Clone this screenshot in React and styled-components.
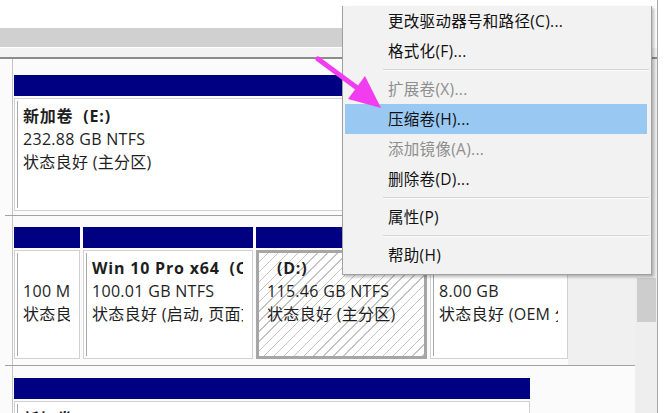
import React from "react"
import styled, { createGlobalStyle } from "styled-components"

const GlobalStyle = createGlobalStyle`
  html, body {
    margin: 0;
    padding: 0;
    background: #fff;
  }
`

const Page = styled.div`
  position: relative;
  width: 665px;
  height: 413px;
  overflow: hidden;
  background: #fff;
  font-family: "Open Sans", "Noto Sans CJK SC", sans-serif;
  color: #1e1e1e;
`

const Frame = styled.div`
  margin-right: 7px;
  height: 100%;
  border-right: 1px solid #a8a8a8;
  display: flex;
  flex-direction: column;
`

const TopBlank = styled.div`
  height: 28px;
`

const GrayBar = styled.div`
  height: 19px;
  background: #d0d0d0;
  margin-right: 6px;
`

const Strip = styled.div`
  height: 9px;
  border-top: 1px solid #fff;
  border-bottom: 2px solid #8c8c8c;
  background: #f3f3f3;
`

const Body = styled.div`
  flex: 1;
  display: flex;
  min-height: 0;
`

const DiskPane = styled.div`
  flex: 1;
  display: flex;
  flex-direction: column;
  background: #fbfbfb;
`

const DiskRow = styled.div`
  display: flex;
  margin-left: 5px;
  border-bottom: 1px solid #a2a2a2;
`

const Gutter = styled.div`
  width: 7px;
  border-right: 1px solid #c4c4c4;
`

const Partitions = styled.div`
  flex: 1;
  display: flex;
  gap: 3px;
  padding: ${p => p.$pad};
  padding-left: 1px;
`

const Column = styled.div`
  width: ${p => p.$w}px;
  flex-shrink: 0;
  display: flex;
  flex-direction: column;
  gap: 2px;
`

const Filler = styled.div`
  flex: 1;
  background: #f0f0f0;
  margin: -12px 0 -6px -3px;
`

const Bar = styled.div`
  height: 21px;
  background: #000082;
`

const Box = styled.div`
  height: ${p => p.$h}px;
  box-sizing: border-box;
  background: #fff;
  border: 1px solid #d2d2d2;
  padding: 2px 0 2px 2px;
`

const HatchBox = styled.div`
  height: ${p => p.$h}px;
  box-sizing: border-box;
  border: 3px solid #a6a6a6;
  background-color: #fff;
  background-image: repeating-linear-gradient(
    135deg,
    #fff 0px,
    #fff 6px,
    #c4c4c4 6px,
    #c4c4c4 7px
  );
  padding: ${p => p.$top || 4}px 8px 0 8px;
  overflow: hidden;
`

const Inner = styled.div`
  height: 100%;
  box-sizing: border-box;
  border-left: 1px solid #a8a8a8;
  padding: ${p => p.$top || 4}px 9px 0 5px;
  overflow: hidden;
`

const Line = styled.div`
  font-size: 16px;
  line-height: 23px;
  white-space: pre;
  overflow: hidden;
  font-weight: ${p => (p.$bold ? 700 : 400)};
  letter-spacing: ${p => (p.$bold ? "0.8px" : "0.3px")};
  color: #1e1e1e;
`

const Scrollbar = styled.div`
  width: 22px;
  background: #eeeeee;
  display: flex;
  flex-direction: column;
  align-items: center;
`

const Thumb = styled.div`
  margin-top: 219px;
  width: 19px;
  height: 44px;
  background: #cdcdcd;
`

const Menu = styled.div`
  position: absolute;
  left: 342px;
  top: 6px;
  width: 308px;
  background: #f2f2f2;
  border: 1px solid #a0a0a0;
  border-top: none;
  box-shadow: 2px 2px 3px rgba(0, 0, 0, 0.28);
  padding-bottom: 4px;
  font-size: 15.5px;
  letter-spacing: 0.3px;
  z-index: 2;
`

const Item = styled.div`
  height: 30px;
  line-height: 30px;
  margin: 0 4px 0 2px;
  padding-left: 43px;
  white-space: nowrap;
  color: ${p => (p.$disabled ? "#8e8e8e" : "#111")};
  background: ${p => (p.$active ? "#99c9f3" : "transparent")};
`

const Separator = styled.div`
  height: 8px;
  display: flex;
  align-items: center;
  padding: 0 2px 0 40px;

  &::after {
    content: "";
    flex: 1;
    border-top: 1px solid #d4d4d4;
    border-bottom: 1px solid #fbfbfb;
  }
`

const Arrow = styled.svg`
  position: absolute;
  left: 300px;
  top: 40px;
  z-index: 3;
`

const Part = ({ w, h, hatch, top, lines }) => {
  const content = lines.map((l, i) => (
    <Line key={i} $bold={l.bold}>{l.text}</Line>
  ))
  return (
    <Column $w={w}>
      <Bar />
      {hatch ? (
        <HatchBox $h={h} $top={top}>{content}</HatchBox>
      ) : (
        <Box $h={h}>
          <Inner $top={top}>{content}</Inner>
        </Box>
      )}
    </Column>
  )
}

const menuItems = [
  { text: "更改驱动器号和路径(C)..." },
  { text: "格式化(F)..." },
  { sep: true },
  { text: "扩展卷(X)...", disabled: true },
  { text: "压缩卷(H)...", active: true },
  { text: "添加镜像(A)...", disabled: true },
  { text: "删除卷(D)..." },
  { sep: true },
  { text: "属性(P)" },
  { sep: true },
  { text: "帮助(H)" },
]

export default function App() {
  return (
    <Page>
      <GlobalStyle />
      <Frame>
        <TopBlank />
        <GrayBar />
        <Strip />
        <Body>
          <DiskPane>
            <DiskRow>
              <Gutter />
              <Partitions $pad="16px 0 4px 0">
                <Part
                  w={554}
                  h={113}
                  lines={[
                    { text: "新加卷  (E:)", bold: true },
                    { text: "232.88 GB NTFS" },
                    { text: "状态良好 (主分区)" },
                  ]}
                />
              </Partitions>
            </DiskRow>
            <DiskRow>
              <Gutter />
              <Partitions $pad="11px 0 6px 0">
                <Part
                  w={66}
                  h={109}
                  lines={[
                    { text: " ", bold: true },
                    { text: "100 MB" },
                    { text: "状态良好 (EFI 系统分区)" },
                  ]}
                />
                <Part
                  w={170}
                  h={109}
                  lines={[
                    { text: "Win 10 Pro x64  (C:)", bold: true },
                    { text: "100.01 GB NTFS" },
                    { text: "状态良好 (启动, 页面文件, 故障转储, 主分区)" },
                  ]}
                />
                <Part
                  w={171}
                  h={109}
                  hatch
                  lines={[
                    { text: "  (D:)", bold: true },
                    { text: "115.46 GB NTFS" },
                    { text: "状态良好 (主分区)" },
                  ]}
                />
                <Part
                  w={138}
                  h={109}
                  lines={[
                    { text: " ", bold: true },
                    { text: "8.00 GB" },
                    { text: "状态良好 (OEM 分区)" },
                  ]}
                />
                <Filler />
              </Partitions>
            </DiskRow>
            <DiskRow>
              <Gutter />
              <Partitions $pad="12px 0 0 0">
                <Part
                  w={516}
                  h={60}
                  top={4}
                  lines={[{ text: "新加卷  (F:)", bold: true }]}
                />
              </Partitions>
            </DiskRow>
          </DiskPane>
          <Scrollbar>
            <Thumb />
          </Scrollbar>
        </Body>
      </Frame>

      <Menu>
        {menuItems.map((m, i) =>
          m.sep ? (
            <Separator key={i} />
          ) : (
            <Item key={i} $disabled={m.disabled} $active={m.active}>
              {m.text}
            </Item>
          )
        )}
      </Menu>

      <Arrow width="100" height="80" viewBox="0 0 100 80">
        <line
          x1="18"
          y1="19"
          x2="60"
          y2="50"
          stroke="#f23cf0"
          strokeWidth="5"
          strokeLinecap="round"
        />
        <polygon points="48,59 65,36 81,68" fill="#f23cf0" />
      </Arrow>
    </Page>
  )
}
